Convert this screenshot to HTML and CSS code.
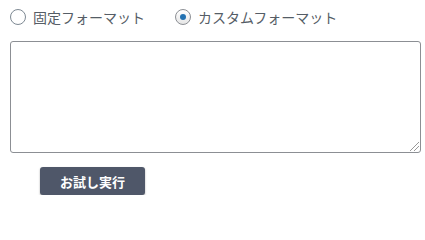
FILE: index.html
```html
<!DOCTYPE html>
<html lang="ja">
<head>
<meta charset="utf-8">
<link rel="stylesheet" href="styles.css">
</head>
<body>
<div class="panel">
  <div class="options">
    <label class="option"><span class="radio"></span><span class="label">固定フォーマット</span></label>
    <label class="option"><span class="radio checked"></span><span class="label">カスタムフォーマット</span></label>
  </div>
  <div class="area"><span class="grip"></span></div>
  <div class="actions"><button class="btn">お試し実行</button></div>
</div>
</body>
</html>
```
FILE: styles.css
```css
* { box-sizing: border-box; }
html, body { margin: 0; background: #fff; }
body { font-family: "Noto Sans CJK JP", "Noto Sans", sans-serif; }
.panel { padding: 9px 4px 0 10px; }
.options { display: flex; align-items: center; gap: 30px; height: 16px; }
.option { display: flex; align-items: center; gap: 7px; color: #555d66; font-size: 14px; line-height: 16px; }
.radio { width: 16px; height: 16px; border-radius: 50%; border: 1px solid #7e8993; background: #fff; position: relative; }
.radio.checked { background: linear-gradient(#fff, #e6e6e6); border-color: #8c8f94; }
.radio.checked::after { content: ""; position: absolute; left: 4px; top: 4px; width: 6px; height: 6px; border-radius: 50%; background: #2271b1; }
.area { margin-top: 16px; height: 112px; width: 411px; border: 1px solid #8c8f94; border-radius: 3px; position: relative; }
.grip { position: absolute; right: 1px; bottom: 1px; width: 9px; height: 9px; background: linear-gradient(135deg, transparent 45%, #999 45%, #999 52%, transparent 52%, transparent 70%, #999 70%, #999 77%, transparent 77%); }
.actions { padding: 14px 0 0 30px; }
.btn { width: 105px; height: 28px; border: 0; border-radius: 3px; background: #4f5769; color: #fff; font-family: "Noto Sans CJK JP", sans-serif; font-weight: bold; font-size: 13px; box-shadow: 0 1px 2px rgba(0,0,0,0.35); padding: 0; }
```
